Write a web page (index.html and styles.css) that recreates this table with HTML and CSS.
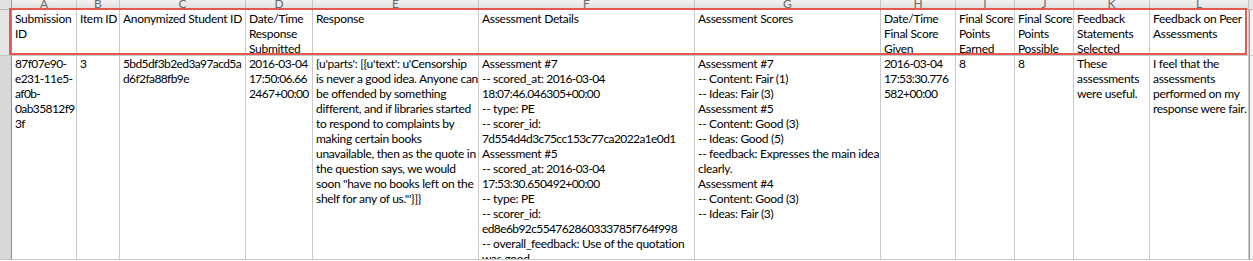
FILE: index.html
```html
<!DOCTYPE html>
<html>
<head>
<meta charset="utf-8">
<link rel="stylesheet" href="styles.css">
</head>
<body>
<div class="sheet">
  <div class="grid">
    <div class="letter corner"></div>
    <div class="letter"><span>A</span></div>
    <div class="letter"><span>B</span></div>
    <div class="letter"><span>C</span></div>
    <div class="letter"><span>D</span></div>
    <div class="letter"><span>E</span></div>
    <div class="letter"><span>F</span></div>
    <div class="letter"><span>G</span></div>
    <div class="letter"><span>H</span></div>
    <div class="letter"><span>I</span></div>
    <div class="letter"><span>J</span></div>
    <div class="letter"><span>K</span></div>
    <div class="letter"><span>L</span></div>
    <div class="letter end"></div>

    <div class="rowhead head-rowhead"></div>
    <div class="cell head">Submission<br>ID</div>
    <div class="cell head">Item ID</div>
    <div class="cell head">Anonymized Student ID</div>
    <div class="cell head">Date/Time<br>Response<br>Submitted</div>
    <div class="cell head">Response</div>
    <div class="cell head">Assessment Details</div>
    <div class="cell head">Assessment Scores</div>
    <div class="cell head">Date/Time<br>Final Score<br>Given</div>
    <div class="cell head">Final Score<br>Points<br>Earned</div>
    <div class="cell head">Final Score<br>Points<br>Possible</div>
    <div class="cell head">Feedback<br>Statements<br>Selected</div>
    <div class="cell head">Feedback on Peer<br>Assessments</div>
    <div class="cell end"></div>

    <div class="rowhead data-rowhead"></div>
    <div class="cell data tight">87f07e90-<br>e231-11e5-<br>af0b-<br>0ab35812f9<br>3f</div>
    <div class="cell data">3</div>
    <div class="cell data tight">5bd5df3b2ed3a97acd5a<br>d6f2fa88fb9e</div>
    <div class="cell data tight">2016-03-04<br>17:50:06.66<br>2467+00:00</div>
    <div class="cell data">{u'parts': [{u'text': u'Censorship<br>is never a good idea. Anyone can<br>be offended by something<br>different, and if libraries started<br>to respond to complaints by<br>making certain books<br>unavailable, then as the quote in<br>the question says, we would<br>soon "have no books left on the<br>shelf for any of us."'}]}</div>
    <div class="cell data">Assessment #7<br>-- scored_at: <span class="num">2016-03-04</span><br><span class="num">18:07:46.046305+00:00</span><br>-- type: PE<br>-- scorer_id:<br><span class="num">7d554d4d3c75cc153c77ca2022a1e0d1</span><br>Assessment #5<br>-- scored_at: <span class="num">2016-03-04</span><br><span class="num">17:53:30.650492+00:00</span><br>-- type: PE<br>-- scorer_id:<br><span class="num">ed8e6b92c554762860333785f764f998</span><br>-- overall_feedback: Use of the quotation<br>was good.</div>
    <div class="cell data">Assessment #7<br>-- Content: Fair (1)<br>-- Ideas: Fair (3)<br>Assessment #5<br>-- Content: Good (3)<br>-- Ideas: Good (5)<br>-- feedback: Expresses the main idea<br>clearly.<br>Assessment #4<br>-- Content: Good (3)<br>-- Ideas: Fair (3)</div>
    <div class="cell data tight">2016-03-04<br>17:53:30.776<br>582+00:00</div>
    <div class="cell data">8</div>
    <div class="cell data">8</div>
    <div class="cell data">These<br>assessments<br>were useful.</div>
    <div class="cell data">I feel that the<br>assessments<br>performed on my<br>response were fair.</div>
    <div class="cell end"></div>
  </div>
  <div class="highlight"></div>
</div>
</body>
</html>
```

FILE: styles.css
```css
html, body {
  margin: 0;
  padding: 0;
  background: #ffffff;
  overflow: hidden;
}

.sheet {
  position: relative;
  width: 1253px;
  height: 261px;
  overflow: hidden;
  font-family: Lato, "Liberation Sans", sans-serif;
  font-size: 12px;
  letter-spacing: -0.3px;
  line-height: 15px;
  color: #000;
}

.grid {
  display: grid;
  grid-template-columns: 12px 65px 43px 126px 67px 166px 216px 186px 75px 59px 59px 76px 99px 4px;
  grid-template-rows: 10px 46px 204px;
}

.grid > div {
  box-sizing: border-box;
  overflow: hidden;
  white-space: nowrap;
}

.letter {
  background: linear-gradient(#f2f2f2, #dfdfdf);
  border-right: 1px solid #c4c4c4;
  border-bottom: 1px solid #b8b8b8;
  display: flex;
  justify-content: center;
  align-items: flex-end;
  color: #6a6a6a;
  font-size: 12px;
  letter-spacing: 0;
}

.letter span {
  line-height: 11px;
  height: 11px;
  margin-bottom: 0;
}

.letter.corner {
  background: #e2e2e2;
  border-right: 1px solid #9a9a9a;
}

.letter.end {
  border-right: none;
  background: #e6e6e6;
}

.rowhead {
  border-right: 1px solid #8f8f8f;
  border-bottom: 1px solid #c4c4c4;
}

.head-rowhead {
  background: #e6e6e6;
}

.data-rowhead {
  background: #d8d8d8;
}

.cell {
  border-right: 1px solid #c9c9c9;
  border-bottom: 1px solid #c9c9c9;
  padding-left: 3px;
}

.cell.head {
  padding-top: 1px;
}

.cell.data {
  padding-top: 0;
}

.tight,
.num {
  letter-spacing: -0.6px;
}

.cell.end {
  border-left: 1px solid #9a9a9a;
  border-right: none;
  background: #f4f4f4;
  padding: 0;
}

.highlight {
  position: absolute;
  left: 9px;
  top: 8px;
  width: 1238px;
  height: 47px;
  box-sizing: border-box;
  border: 2px solid #e3584f;
  pointer-events: none;
}
```
